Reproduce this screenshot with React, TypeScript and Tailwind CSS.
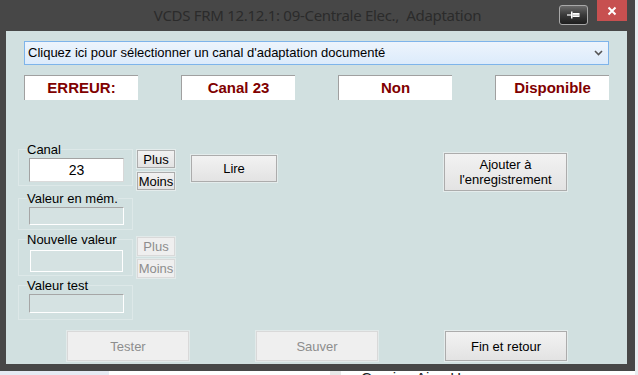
import React from 'react';

const statuses = ['ERREUR:', 'Canal 23', 'Non', 'Disponible'];

const Btn: React.FC<{ disabled?: boolean; className?: string; children: React.ReactNode }> = ({ disabled, className, children }) => (
  <button
    type="button"
    disabled={disabled}
    className={
      'flex items-center justify-center border text-[13px] leading-[15px] ' +
      (disabled
        ? 'border-[#d9d9d9] bg-[#efefef] text-[#8d8d8d] shadow-[0_0_0_1px_#e2eaea] '
        : 'border-[#acacac] bg-linear-to-b from-[#f2f2f2] to-[#e3e3e3] text-black shadow-[0_0_0_1px_#e4ecec] ') +
      (className ?? '')
    }
  >
    {children}
  </button>
);

const Group: React.FC<{ label: string; className?: string; children: React.ReactNode }> = ({ label, className, children }) => (
  <fieldset className={'w-[115px] border border-[#dde8e8] pl-[8px] pr-[8px] ' + (className ?? '')}>
    <legend className="px-0 text-[13px] leading-[15px] text-black">{label}</legend>
    {children}
  </fieldset>
);

export default function App() {
  return (
    <div className="flex w-[638px] h-[375px] overflow-hidden bg-[#474747] font-['Liberation_Sans',Arial,sans-serif]">
      <div className="flex flex-col w-[635px]">
        {/* title bar */}
        <div className="relative h-[31px] shrink-0 flex items-center justify-center">
          <span className="whitespace-pre text-[15px] text-[#2b2b2b] font-['Noto_Sans',sans-serif] tracking-[-0.3px]">
            VCDS FRM 12.12.1: 09-Centrale Elec.,  Adaptation
          </span>
          <div className="absolute top-0 right-[8px] flex items-start gap-[9px]">
            <div className="mt-[5px] w-[29px] h-[20px] rounded-[3px] border border-[#a8a8a8] bg-linear-to-b from-[#6a6a6a] via-[#3a3a3a] to-[#1e1e1e] flex items-center justify-center">
              <svg width="14" height="8" viewBox="0 0 14 8">
                <path d="M0 4h4" stroke="#fff" strokeWidth="1.2" />
                <rect x="4" y="0.5" width="1.5" height="7" fill="#fff" />
                <rect x="5.5" y="2" width="7" height="4" fill="#fff" />
                <path d="M6 4.2h6" stroke="#9a9a9a" strokeWidth="0.8" />
              </svg>
            </div>
            <div className="w-[30px] h-[21px] bg-[#c75050] flex items-center justify-center">
              <svg width="10" height="10" viewBox="0 0 10 10">
                <path d="M1.5 1.5l7 7M8.5 1.5l-7 7" stroke="#fff" strokeWidth="2" />
              </svg>
            </div>
          </div>
        </div>

        {/* body */}
        <div className="flex h-[333px] shrink-0">
          <div className="w-[6px]" />
          <div className="w-[621px] bg-[#d1e0e0] flex flex-col">
            <div className="mx-[18px] mt-[10px] h-[24px] border border-[#7eb4ea] bg-linear-to-b from-[#edf4fc] to-[#dcebfb] flex items-center justify-between pl-[3px] pr-[5px]">
              <span className="text-[13px] text-black">Cliquez ici pour sélectionner un canal d'adaptation documenté</span>
              <svg width="9" height="6" viewBox="0 0 9 6">
                <path d="M1 1l3.5 3.5L8 1" stroke="#555" strokeWidth="1.6" fill="none" />
              </svg>
            </div>

            <div className="mx-[18px] mt-[10px] flex justify-between">
              {statuses.map((s) => (
                <div
                  key={s}
                  className="w-[114px] h-[25px] bg-white border-t border-l border-[#a0a0a0] flex items-center justify-center text-[15px] font-bold text-[#800000]"
                >
                  {s}
                </div>
              ))}
            </div>

            <div className="mt-[42px] ml-[12px] flex items-start h-[178px]">
              <div className="flex flex-col">
                <Group label="Canal" className="pt-[1px] pb-[3px]">
                  <div className="ml-[2px] w-[95px] h-[24px] bg-white border border-[#a3a3a3] border-r-[#d8d8d8] border-b-[#dadada] flex items-center justify-center text-[14px]">
                    23
                  </div>
                </Group>
                <Group label="Valeur en mém." className="mt-[5px] pt-[1px] pb-[4px]">
                  <div className="ml-[2px] w-[95px] h-[18px] bg-[#d5e2e2] border border-[#a6a6a6] border-r-white border-b-white" />
                </Group>
                <Group label="Nouvelle valeur" className="mt-[2px] pt-[3px] pb-[3px]">
                  <div className="ml-[3px] w-[93px] h-[22px] bg-[#d5e2e2] border border-white" />
                </Group>
                <Group label="Valeur test" className="mt-[2px] pt-[1px] pb-[6px]">
                  <div className="ml-[2px] w-[95px] h-[19px] bg-[#d5e2e2] border border-[#a6a6a6] border-r-white border-b-white" />
                </Group>
              </div>

              <div className="ml-[4px] flex flex-col">
                <Btn className="mt-[8px] w-[38px] h-[18px]">Plus</Btn>
                <Btn className="mt-[4px] w-[38px] h-[18px]">Moins</Btn>
                <Btn disabled className="mt-[47px] w-[38px] h-[19px]">Plus</Btn>
                <Btn disabled className="mt-[3px] w-[38px] h-[19px]">Moins</Btn>
              </div>

              <Btn className="ml-[16px] mt-[13px] w-[86px] h-[27px]">Lire</Btn>

              <Btn className="ml-[167px] mt-[11px] w-[123px] h-[38px] flex-col">
                <span>Ajouter à</span>
                <span>l'enregistrement</span>
              </Btn>
            </div>

            <div className="mt-[11px] ml-[61px] flex gap-[67px]">
              <Btn disabled className="w-[122px] h-[30px]">Tester</Btn>
              <Btn disabled className="w-[122px] h-[30px]">Sauver</Btn>
              <Btn className="w-[122px] h-[30px]">Fin et retour</Btn>
            </div>
          </div>
        </div>

        <div className="h-[7px] shrink-0" />

        {/* desktop behind the window */}
        <div className="h-[4px] shrink-0 flex overflow-hidden">
          <div className="w-[109px] bg-[#e6eaf3]" />
          <div className="w-[221px] bg-white" />
          <div className="w-[11px] bg-[#e8e8e8]" />
          <div className="flex-1 bg-white pl-[20px] overflow-hidden">
            <div className="-mt-[2px] text-[15px] leading-[18px] text-[#222] whitespace-nowrap">Coming Aine Home</div>
          </div>
        </div>
      </div>
      <div className="w-[3px] bg-[#e8ecef]" />
    </div>
  );
}
